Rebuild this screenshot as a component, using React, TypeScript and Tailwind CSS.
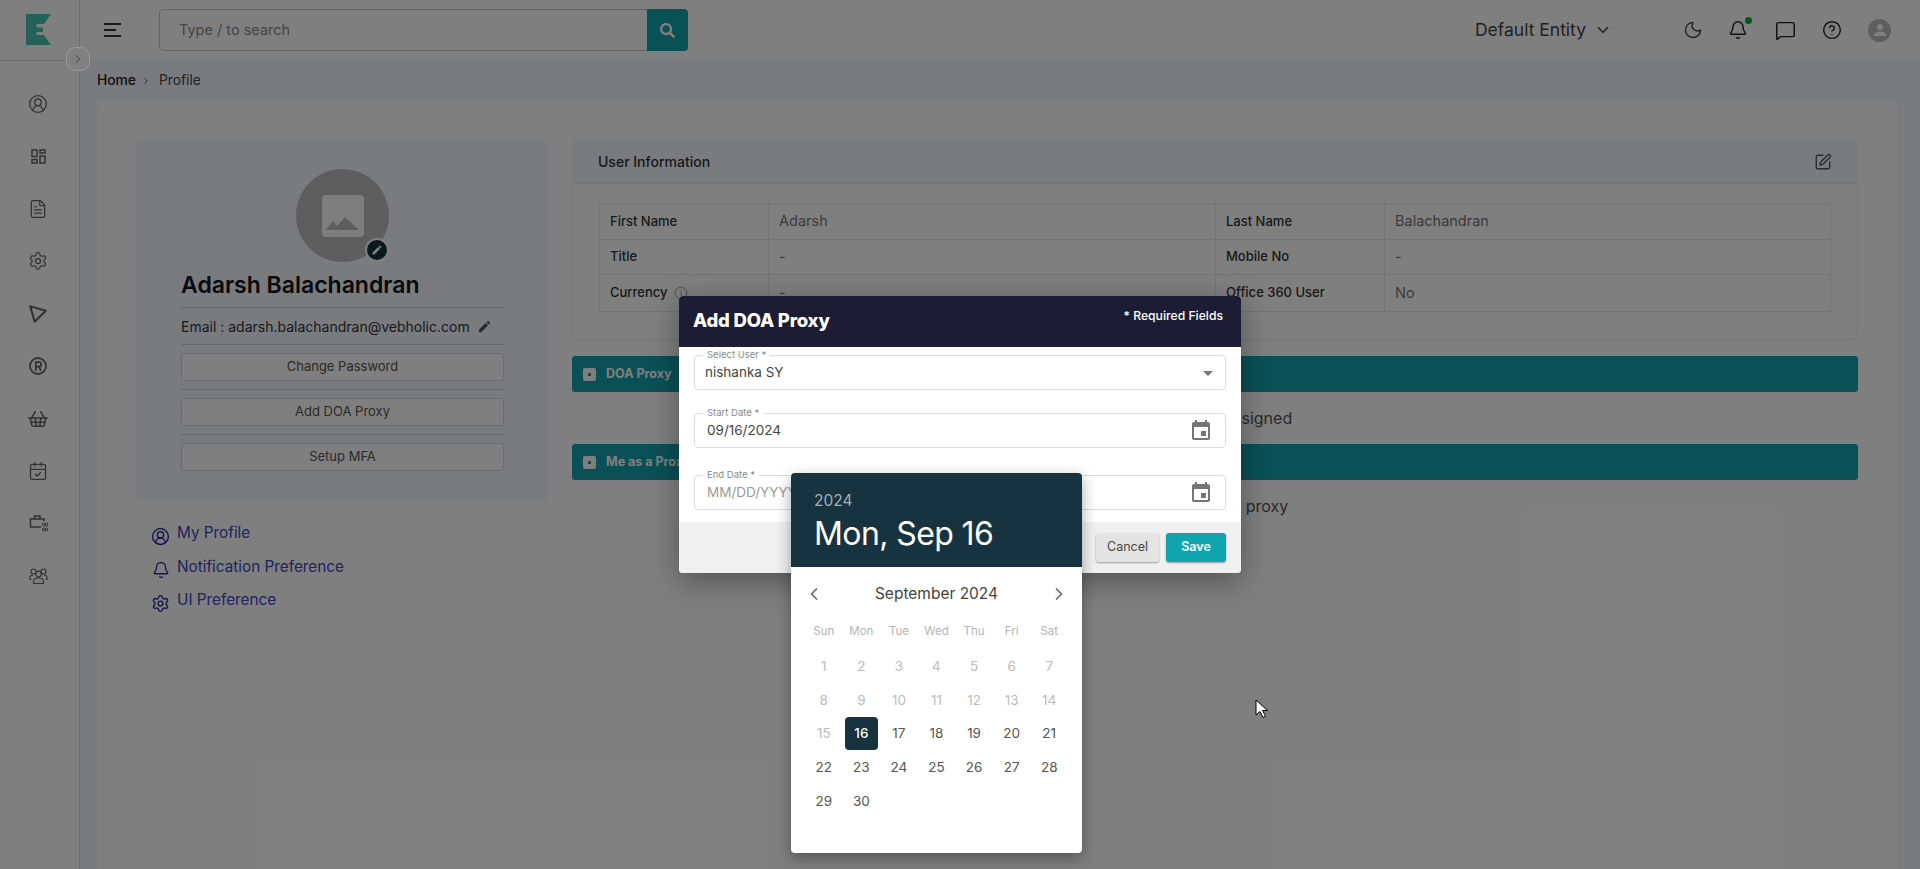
import React from "react";
import {
  ChevronRight, ChevronLeft, ChevronDown, CircleUserRound, FileText, Settings, CalendarCheck, Moon, Bell,
  MessageSquare, CircleHelp, SquarePen, Info, ShoppingBasket,
} from "lucide-react";
import { FaSearch } from "react-icons/fa";
import { MdEdit, MdArrowDropDown, MdPerson } from "react-icons/md";

const font = "font-['Inter','Liberation_Sans',sans-serif]";
const ICON = "#666666";

function Logo() {
  return (
    <svg width="25" height="31" viewBox="0 0 25 31">
      <path d="M0 0H25L18 10H10.5V13.5H17V18H10.5V21H18L25 31H0Z" fill="#46c4b2" />
    </svg>
  );
}

function Dash() {
  return (
    <svg width="15" height="15" viewBox="0 0 15 15" fill="none" stroke={ICON} strokeWidth="1.5">
      <rect x="1" y="1" width="5" height="6.5" />
      <rect x="9" y="1" width="5" height="3" />
      <rect x="1" y="10.5" width="5" height="3.5" />
      <rect x="9" y="7" width="5" height="7" />
    </svg>
  );
}

function Tri() {
  return (
    <svg width="20" height="20" viewBox="0 0 18 18" fill="none" stroke={ICON} strokeWidth="1.9" strokeLinejoin="round">
      <path d="M2 2L16 6L6 16Z" />
    </svg>
  );
}

function Reg() {
  return (
    <svg width="18" height="18" viewBox="0 0 18 18" fill="none" stroke={ICON} strokeWidth="1.8" strokeLinecap="round">
      <circle cx="9" cy="9" r="8" />
      <path d="M6.8 13V5.2H10a2.2 2.2 0 0 1 0 4.4H6.8M10 9.6L11.6 13" />
    </svg>
  );
}

function Brief() {
  return (
    <svg width="19" height="18" viewBox="0 0 19 18" fill="none" stroke={ICON} strokeWidth="1.6">
      <path d="M12 13H1.5V5H15V7" />
      <path d="M5.5 5V2H11V5" />
      <rect x="13.5" y="9" width="2" height="3" rx="0.7" strokeWidth="1" />
      <rect x="16.5" y="9" width="2" height="3" rx="0.7" strokeWidth="1" />
      <rect x="13.5" y="14" width="2" height="3" rx="0.7" strokeWidth="1" />
      <rect x="16.5" y="14" width="2" height="3" rx="0.7" strokeWidth="1" />
    </svg>
  );
}

function Group() {
  return (
    <svg width="19" height="16" viewBox="0 0 19 16" fill="none" stroke={ICON} strokeWidth="1.2">
      <circle cx="9.5" cy="6" r="2.8" />
      <circle cx="4.5" cy="3.5" r="2.5" />
      <circle cx="14.5" cy="3.5" r="2.5" />
      <path d="M4.5 15.5V13.5C4.5 11 7 10 9.5 10S14.5 11 14.5 13.5V15.5H4.5Z" />
      <path d="M2.5 11.5H1V9.5C1 8 2 7 4 7M16.5 11.5H18V9.5C18 8 17 7 15 7" />
    </svg>
  );
}

function Cal() {
  return (
    <svg width="24" height="24" viewBox="0 0 24 24" fill="#757575">
      <path d="M17 12h-5v5h5v-5zM16 1v2H8V1H6v2H5c-1.11 0-1.99.9-1.99 2L3 19c0 1.1.89 2 2 2h14c1.1 0 2-.9 2-2V5c0-1.1-.9-2-2-2h-1V1h-2zm3 18H5V8h14v11z" />
    </svg>
  );
}

function Sidebar() {
  const icons = [
    <CircleUserRound size={20} color={ICON} strokeWidth={1.6} />,
    <Dash />,
    <FileText size={20} color={ICON} strokeWidth={1.5} />,
    <Settings size={20} color={ICON} strokeWidth={1.5} />,
    <Tri />,
    <Reg />,
    <ShoppingBasket size={22} color={ICON} strokeWidth={1.7} />,
    <CalendarCheck size={20} color={ICON} strokeWidth={1.6} />,
    <Brief />,
    <Group />,
  ];
  return (
    <aside className="w-[80px] shrink-0 bg-white border-r border-[#d9d9d9] flex flex-col">
      <div className="h-[61px] shrink-0 border-b border-[#d9d9d9] pl-[26px] pt-[14px]">
        <Logo />
      </div>
      <div className="flex flex-col items-center pr-[3px] pt-[17px]">
        {icons.map((ic, i) => (
          <div key={i} className="h-[52.4px] w-full flex items-center justify-center">{ic}</div>
        ))}
      </div>
    </aside>
  );
}

function Header() {
  return (
    <header className="h-[60px] shrink-0 bg-white flex items-center">
      <div className="ml-[24px] flex flex-col items-start gap-[4px]">
        <div className="w-[17px] h-[2px] bg-[#333]" />
        <div className="w-[12px] h-[2px] bg-[#333]" />
        <div className="w-[17px] h-[2px] bg-[#333]" />
      </div>
      <div className="ml-[38px] w-[529px] h-[42px] flex rounded-[4px] border border-[#c4c4c4] bg-white">
        <div className="flex-1 flex items-center pl-[19px] text-[14.5px] text-[#8a8a8a]">Type / to search</div>
        <div className="w-[41px] -my-px -mr-px rounded-r-[4px] bg-[#14a3ad] flex items-center justify-center">
          <FaSearch size={15} color="#fff" />
        </div>
      </div>
      <div className="ml-auto flex items-center text-[#444]">
        <span className="text-[17.5px]">Default Entity</span>
        <ChevronDown size={18} className="ml-[8px]" strokeWidth={2.2} />
        <Moon size={20} strokeWidth={1.7} className="ml-[71px]" />
        <span className="relative ml-[25px]">
          <Bell size={20} strokeWidth={1.7} color="#222" />
          <span className="absolute -top-[3px] right-[-4px] w-[7px] h-[7px] rounded-full bg-[#00b33c]" />
        </span>
        <MessageSquare size={21} strokeWidth={1.7} color="#222" className="ml-[27px]" />
        <CircleHelp size={20} strokeWidth={1.7} color="#222" className="ml-[26px]" />
        <span className="ml-[26px] mr-[29px] w-[23px] h-[23px] rounded-full bg-[#bdbdbd] flex items-center justify-center">
          <MdPerson size={18} color="#fff" />
        </span>
      </div>
    </header>
  );
}

function ProfileCard() {
  const btn = "h-[28px] w-full rounded-[3px] border border-[#d8d8d8] bg-white flex items-center justify-center text-[13px] text-[#555]";
  return (
    <div className="h-[360px] rounded-[6px] bg-[#f4f6ff] px-[45px] pt-[29px]">
      <div className="relative mx-auto w-[93px] h-[93px] rounded-full bg-[#bdbdbd] flex items-center justify-center">
        <svg width="42" height="42" viewBox="0 0 42 42">
          <rect width="42" height="42" rx="4" fill="#fff" opacity="0.95" />
          <path d="M4 35L11 26L15 31L23 22L37 35Z" fill="#bdbdbd" />
        </svg>
        <span className="absolute right-0 bottom-0 w-[24px] h-[24px] rounded-full bg-[#16323f] border-[2px] border-white flex items-center justify-center">
          <MdEdit size={12} color="#fff" />
        </span>
      </div>
      <div className="mt-[9px] h-[37px] border-b border-[#cfcfcf] flex items-center text-[23px] font-semibold text-[#111] leading-none pb-[8px]">Adarsh Balachandran</div>
      <div className="h-[37px] border-b border-[#cfcfcf] flex items-center text-[14px] text-[#333]">
        Email : adarsh.balachandran@vebholic.com
        <MdEdit size={15} color="#555" className="ml-[7px]" />
      </div>
      <div className="pt-[8px] pb-[8px] border-b border-[#cfcfcf]"><div className={btn}>Change Password</div></div>
      <div className="pt-[8px] pb-[8px] border-b border-[#cfcfcf]"><div className={btn}>Add DOA Proxy</div></div>
      <div className="pt-[8px]"><div className={btn}>Setup MFA</div></div>
    </div>
  );
}

function Links() {
  const row = "flex items-start text-[15.3px] text-[#4046c4] h-[33.5px]";
  return (
    <div className="mt-[22px] pl-[15px]">
      <div className={row}>
        <CircleUserRound size={19} strokeWidth={1.8} color="#2a2d9a" className="mt-[5px]" /><span className="ml-[7px]">My Profile</span>
      </div>
      <div className={row}>
        <Bell size={18} strokeWidth={1.8} color="#2a2d9a" className="mt-[5px] ml-[1px]" /><span className="ml-[7px]">Notification Preference</span>
      </div>
      <div className={row}>
        <Settings size={19} strokeWidth={1.8} color="#2a2d9a" className="mt-[5px]" /><span className="ml-[7px]">UI Preference</span>
      </div>
    </div>
  );
}

function Row({ a, b, c, d, info }: { a: string; b: string; c: string; d: string; info?: boolean }) {
  const l = "px-[10px] flex items-center text-[13px] font-medium text-[#333] border-r border-[#e8e8e8]";
  const v = "px-[10px] flex items-center text-[14.5px] text-[#777]";
  return (
    <div className="grid grid-cols-[169px_447px_169px_1fr] h-[35.5px] border-b border-[#e8e8e8] last:border-b-0">
      <div className={l}>{a}{info && <Info size={14} strokeWidth={1.2} color="#777" className="ml-[6px]" />}</div>
      <div className={v + " border-r border-[#e8e8e8]"}>{b}</div>
      <div className={l}>{c}</div>
      <div className={v}>{d}</div>
    </div>
  );
}

function Bar({ text }: { text: string }) {
  return (
    <div className="h-[36px] rounded-[3px] bg-[#14a0ad] flex items-center pl-[11px] text-white text-[12.5px] font-bold">
      <span className="w-[13px] h-[13px] rounded-[2px] bg-white flex items-center justify-center">
        <span className="w-[3px] h-[3px] bg-[#14a0ad]" />
      </span>
      <span className="ml-[10px]">{text}</span>
    </div>
  );
}

function UserInfo() {
  return (
    <div className="flex-1 min-w-0">
      <div className="rounded-[6px] border border-[#eaeaea] h-[200px]">
        <div className="h-[44px] -m-px mb-0 rounded-t-[6px] bg-[#f4f6ff] flex items-center justify-between pl-[26px] pr-[26px] border-b border-[#e8e8e8]">
          <span className="text-[14px] font-medium text-[#333]">User Information</span>
          <SquarePen size={18} color="#555" strokeWidth={1.8} />
        </div>
        <div className="mx-[26px] mt-[19px] border border-[#e8e8e8]">
          <Row a="First Name" b="Adarsh" c="Last Name" d="Balachandran" />
          <Row a="Title" b="-" c="Mobile No" d="-" />
          <Row a="Currency" b="-" c="Office 360 User" d="No" info />
        </div>
      </div>
      <div className="mt-[16px]"><Bar text="DOA Proxy" /></div>
      <div className="h-[52px] flex items-center justify-center text-[16px] text-[#555]">No Proxies assigned</div>
      <Bar text="Me as a Proxy" />
      <div className="h-[52px] flex items-center justify-center text-[16px] text-[#555]">You are not a proxy</div>
    </div>
  );
}

function Field({ label, children, right, top }: { label: string; children: React.ReactNode; right: React.ReactNode; top: string }) {
  return (
    <div className={"relative h-[35px] rounded-[4px] border border-[#dcdcdc] flex items-center pr-[12px] pl-[12px] " + top}>
      <span className="absolute left-[8px] top-[-7px] bg-white px-[4px] text-[9.5px] leading-[12px] text-[#8a8a8a]">{label}</span>
      <div className="flex-1 text-[13.5px]">{children}</div>
      {right}
    </div>
  );
}

function Modal() {
  return (
    <div className="absolute left-[679px] top-[296px] w-[562px] h-[277px] rounded-[4px] bg-white overflow-hidden flex flex-col shadow-[0_8px_30px_rgba(0,0,0,0.35)]">
      <div className="h-[51px] shrink-0 bg-[#1c1c34] flex justify-between pl-[14px] pr-[18px] text-white">
        <span className="text-[18.5px] font-extrabold mt-[12px] leading-[24px] tracking-[-0.2px]">Add DOA Proxy</span>
        <span className="text-[12.2px] font-medium mt-[12px] leading-[16px]">* Required Fields</span>
      </div>
      <div className="px-[15px] pt-[8px] flex-1">
        <Field label="Select User *" top="" right={<MdArrowDropDown size={24} color="#757575" className="-mr-[7px]" />}>
          <span className="text-[#444] -ml-[2px]">nishanka SY</span>
        </Field>
        <Field label="Start Date *" top="mt-[23px]" right={<Cal />}>
          <span className="text-[#444]">09/16/2024</span>
        </Field>
        <Field label="End Date *" top="mt-[27px]" right={<Cal />}>
          <span className="text-[#9a9a9a]">MM/DD/YYYY</span>
        </Field>
      </div>
      <div className="h-[51px] shrink-0 bg-[#f0f0f0] flex items-center justify-end gap-[7px] pr-[15px]">
        <div className="w-[63px] h-[29px] rounded-[3px] bg-[#e4e4e4] shadow-[0_1px_2px_rgba(0,0,0,0.35)] flex items-center justify-center text-[12.5px] text-[#444]">Cancel</div>
        <div className="w-[60px] h-[29px] rounded-[3px] bg-[#10a5ae] shadow-[0_1px_2px_rgba(0,0,0,0.35)] flex items-center justify-center text-[12.5px] font-semibold text-white">Save</div>
      </div>
    </div>
  );
}

function Picker() {
  const weekdays = ["Sun", "Mon", "Tue", "Wed", "Thu", "Fri", "Sat"];
  const days = Array.from({ length: 30 }, (_, i) => i + 1);
  return (
    <div className="absolute left-[791px] top-[473px] w-[291px] h-[380px] rounded-[4px] bg-white overflow-hidden shadow-[0_5px_15px_rgba(0,0,0,0.35)]">
      <div className="h-[94px] bg-[#17333f] pl-[23px] pt-[18px] text-white">
        <div className="text-[15.5px] leading-[20px] text-[#a4b0b5]">2024</div>
        <div className="text-[32px] tracking-[-0.6px] leading-[44px] mt-[1px]">Mon, Sep 16</div>
      </div>
      <div className="h-[44px] mt-[5px] flex items-center justify-between pl-[13px] pr-[13px] text-[#444]">
        <ChevronLeft size={20} strokeWidth={2} color="#666" />
        <span className="text-[15.5px]">September 2024</span>
        <ChevronRight size={20} strokeWidth={2} color="#666" />
      </div>
      <div className="grid grid-cols-7 w-[263px] ml-[14px] mt-[6px] text-[11.5px] text-[#b5b5b5] text-center h-[20px] items-center">
        {weekdays.map((w) => <div key={w}>{w}</div>)}
      </div>
      <div className="grid grid-cols-7 auto-rows-[33.8px] w-[263px] ml-[14px] mt-[7px] text-[13.5px] text-center">
        {days.map((d) => (
          <div key={d} className="flex items-center justify-center">
            <span className={
              "w-[33px] h-[33px] rounded-[4px] flex items-center justify-center " +
              (d === 16 ? "bg-[#17333f] text-white font-medium" : d < 16 ? "text-[#bcbcbc]" : "text-[#555]")
            }>{d}</span>
          </div>
        ))}
      </div>
    </div>
  );
}

export default function App() {
  return (
    <div className={"relative h-[869px] w-full overflow-hidden flex bg-[#f4f6ff] " + font}>
      <Sidebar />
      <div className="flex-1 min-w-0 flex flex-col">
        <Header />
        <div className="h-[41px] shrink-0 flex items-center pl-[17px] text-[13.8px] text-[#444]">
          <span className="font-medium text-[#222]">Home</span>
          <ChevronRight size={10} className="mx-[5px]" />
          <span className="ml-[3px]">Profile</span>
        </div>
        <div className="flex-1 ml-[17px] mr-[23px] rounded-t-[6px] bg-white pt-[39px] pl-[39px] pr-[39px] flex gap-[23px]">
          <div className="w-[413px] shrink-0">
            <ProfileCard />
            <Links />
          </div>
          <UserInfo />
        </div>
      </div>
      <div className="absolute inset-0 bg-black/50" />
      <Modal />
      <Picker />
      <svg width="14" height="20" viewBox="0 0 14 20" className="absolute left-[1255px] top-[699px]">
        <path d="M1 1V16L5 12.5L8 18.5L10.5 17.2L7.6 11.5H12.5Z" fill="#fff" stroke="#000" strokeWidth="1" />
      </svg>
      <div className="absolute left-[66px] top-[47px] w-[24px] h-[24px] rounded-[10px] border border-[#9a9a9a] bg-[#808080] flex items-center justify-center">
        <ChevronRight size={14} color="#333" strokeWidth={1.4} />
      </div>
    </div>
  );
}
